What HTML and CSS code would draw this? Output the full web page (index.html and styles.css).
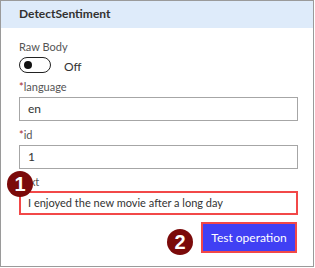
FILE: index.html
```html
<!DOCTYPE html>
<html lang="en">
<head>
    <meta charset="UTF-8">
    <title>DetectSentiment</title>
    <link rel="stylesheet" href="styles.css">
</head>
<body>
    <div class="panel">
        <div class="panel-header">DetectSentiment</div>
        <div class="panel-body">
            <div class="label label-first">Raw Body</div>
            <div class="toggle-row">
                <span class="toggle"><span class="knob"></span></span>
                <span class="toggle-text">Off</span>
            </div>

            <div class="label"><span class="req">*</span>language</div>
            <div class="field">en</div>

            <div class="label"><span class="req">*</span>id</div>
            <div class="field">1</div>

            <div class="label label-text">Text</div>
            <div class="field field-marked">I enjoyed the new movie after a long day</div>

            <div class="actions">
                <span class="btn-mark"><button class="btn">Test operation</button></span>
            </div>
        </div>

        <!-- callout badges -->
        <span class="badge badge-one">1</span>
        <span class="badge badge-two">2</span>
    </div>
</body>
</html>
```

FILE: styles.css
```css
body {
    margin: 0;
    background: #fff;
    font-family: Lato, 'Noto Sans', sans-serif;
    color: #333;
}
.panel {
    position: relative;
    width: 314px;
    height: 267px;
    border: 1px solid #9a9a9a;
    box-sizing: border-box;
    background: #fff;
}
.panel-header {
    height: 27px;
    line-height: 26px;
    background: #deebfa;
    padding-left: 18px;
    font-size: 12px;
    font-weight: 700;
    color: #323130;
}
.panel-body {
    padding: 0 15px 0 18px;
}
.label {
    font-size: 11px;
    line-height: 14px;
    color: #555;
    margin-top: 7px;
}
.label-first {
    margin-top: 12px;
}
.label-text {
    margin-top: 6px;
}
.req {
    color: #a4262c;
}
.toggle-row {
    display: flex;
    align-items: center;
    margin-top: 3px;
    height: 16px;
}
.toggle {
    width: 32px;
    height: 16px;
    border: 1.5px solid #222;
    border-radius: 9px;
    box-sizing: border-box;
    display: flex;
    align-items: center;
    padding-left: 4px;
}
.knob {
    width: 8px;
    height: 8px;
    border-radius: 50%;
    background: #111;
}
.toggle-text {
    margin-left: 13px;
    margin-top: 3px;
    font-size: 12px;
    color: #333;
}
.field {
    margin-top: 3px;
    height: 24px;
    border: 1px solid #a6a6a6;
    box-sizing: border-box;
    padding-left: 8px;
    font-size: 12px;
    line-height: 22px;
    color: #333;
}
.field-marked {
    margin-top: 2px;
    border: 2px solid #f24848;
    padding-left: 7px;
    font-size: 11px;
    line-height: 20px;
}
.actions {
    display: flex;
    justify-content: flex-end;
    margin-top: 7px;
    margin-right: 1px;
}
.btn-mark {
    border: 2px solid #f24848;
    display: flex;
}
.btn {
    width: 92px;
    height: 27px;
    border: none;
    background: #4040f4;
    color: #fff;
    font-family: Lato, 'Noto Sans', sans-serif;
    font-size: 12px;
    padding: 0;
}
.badge {
    position: absolute;
    width: 26px;
    height: 26px;
    border-radius: 50%;
    background: #7b0a0a;
    color: #fff;
    font-family: 'Liberation Sans', Arial, sans-serif;
    font-weight: bold;
    font-size: 20px;
    line-height: 26px;
    text-align: center;
}
.badge-one {
    left: 6px;
    top: 170px;
}
.badge-two {
    left: 166px;
    top: 228px;
}
```
